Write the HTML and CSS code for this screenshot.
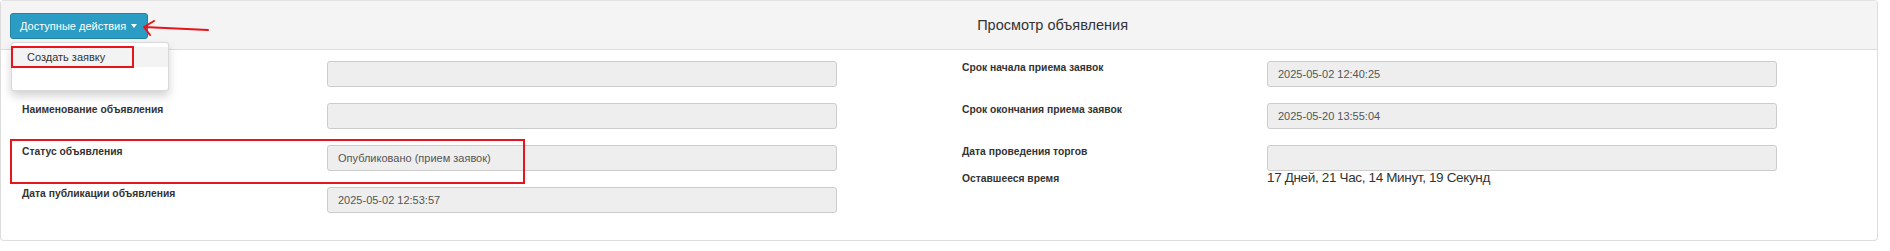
FILE: index.html
```html
<!DOCTYPE html>
<html lang="ru">
<head>
    <meta charset="UTF-8">
    <title>Просмотр объявления</title>
    <link rel="stylesheet" href="styles.css">
</head>
<body>
    <div class="panel">
        <div class="panel-heading">
            <div class="btn-group">
                <button class="btn-info" type="button">Доступные действия <span class="caret"></span></button>
                <svg class="mark-arrow" width="80" height="20" viewBox="0 0 80 20">
                    <path d="M2 7 L66 10 M2 7 L12 1 M2 7 L8 15" fill="none" stroke="#e8141b" stroke-width="2" stroke-linecap="round"/>
                </svg>
                <ul class="dropdown-menu">
                    <li class="active"><a href="#">Создать заявку</a></li>
                </ul>
            </div>
            <h3 class="panel-title">Просмотр объявления</h3>
        </div>

        <div class="panel-body">
            <div class="col">
                <div class="field">
                    <label>Номер объявления</label>
                    <div class="input"></div>
                </div>
                <div class="field">
                    <label>Наименование объявления</label>
                    <div class="input"></div>
                </div>
                <div class="field highlighted">
                    <label>Статус объявления</label>
                    <div class="input">Опубликовано (прием заявок)</div>
                </div>
                <div class="field">
                    <label>Дата публикации объявления</label>
                    <div class="input">2025-05-02 12:53:57</div>
                </div>
            </div>
            <div class="col">
                <div class="field">
                    <label>Срок начала приема заявок</label>
                    <div class="input">2025-05-02 12:40:25</div>
                </div>
                <div class="field">
                    <label>Срок окончания приема заявок</label>
                    <div class="input">2025-05-20 13:55:04</div>
                </div>
                <div class="field tight">
                    <label>Дата проведения торгов</label>
                    <div class="input"></div>
                </div>
                <div class="field">
                    <label>Оставшееся время</label>
                    <div class="countdown">17 Дней, 21 Час, 14 Минут, 19 Секунд</div>
                </div>
            </div>
        </div>
    </div>
</body>
</html>
```

FILE: styles.css
```css
* {
    margin: 0;
    padding: 0;
    box-sizing: border-box;
}

body {
    font-family: 'Liberation Sans', Arial, sans-serif;
    color: #333;
    background: #fff;
}

.panel {
    width: 1878px;
    height: 241px;
    border: 1px solid #ddd;
    border-top-color: #e2e2e2;
    border-radius: 4px;
}

.panel-heading {
    display: flex;
    align-items: center;
    height: 49px;
    padding: 0 9px;
    background: #f4f4f4;
    border-bottom: 1px solid #ddd;
}

.btn-group {
    position: relative;
}

.btn-info {
    display: flex;
    align-items: center;
    gap: 5px;
    height: 26px;
    padding: 0 10px 0 9px;
    font-family: inherit;
    font-size: 11px;
    color: #fff;
    background: #2b9cc3;
    border: 1px solid #22829f;
    border-radius: 3px;
    margin-top: 1px;
}

.caret {
    width: 0;
    height: 0;
    border-top: 4px solid #fff;
    border-left: 3px solid transparent;
    border-right: 3px solid transparent;
}

.mark-arrow {
    position: absolute;
    left: 132px;
    top: 8px;
}

.dropdown-menu {
    position: absolute;
    top: 30px;
    left: 1px;
    width: 158px;
    height: 49px;
    padding-top: 4px;
    list-style: none;
    background: #fff;
    border: 1px solid rgba(0, 0, 0, 0.15);
    border-radius: 3px;
    box-shadow: 0 5px 10px rgba(0, 0, 0, 0.18);
    z-index: 10;
}

.dropdown-menu a {
    display: block;
    height: 20px;
    line-height: 20px;
    padding-left: 15px;
    font-size: 11px;
    color: #333;
    text-decoration: none;
}

.dropdown-menu .active a {
    background: #f3f3f3;
    outline: 2px solid #e8141b;
    outline-offset: -1px;
    margin-right: 35px;
    box-shadow: 35px 0 0 #f3f3f3;
}

.panel-title {
    margin-left: 829px;
    font-size: 14.5px;
    font-weight: normal;
    color: #333;
}

.panel-body {
    display: grid;
    grid-template-columns: 940px 1fr;
    padding-top: 11px;
}

.field {
    position: relative;
    display: flex;
    align-items: flex-start;
    margin-bottom: 16px;
}

.field.tight {
    margin-bottom: 0;
}

.field label {
    flex: none;
    width: 326px;
    padding-left: 21px;
    padding-top: 1px;
    font-size: 10.3px;
    font-weight: bold;
    color: #333;
}

.input {
    width: 510px;
    height: 26px;
    line-height: 24px;
    padding: 0 10px;
    font-size: 11px;
    color: #555;
    background: #eee;
    border: 1px solid #ccc;
    border-radius: 3px;
}

.countdown {
    font-size: 13.5px;
    line-height: 14px;
    letter-spacing: -0.35px;
    color: #333;
}

.field.tight + .field label {
    padding-top: 2px;
}

.highlighted::after {
    content: '';
    position: absolute;
    left: 9px;
    top: -6px;
    width: 511px;
    height: 41px;
    border: 2px solid #e8141b;
    pointer-events: none;
    z-index: 5;
}
```
